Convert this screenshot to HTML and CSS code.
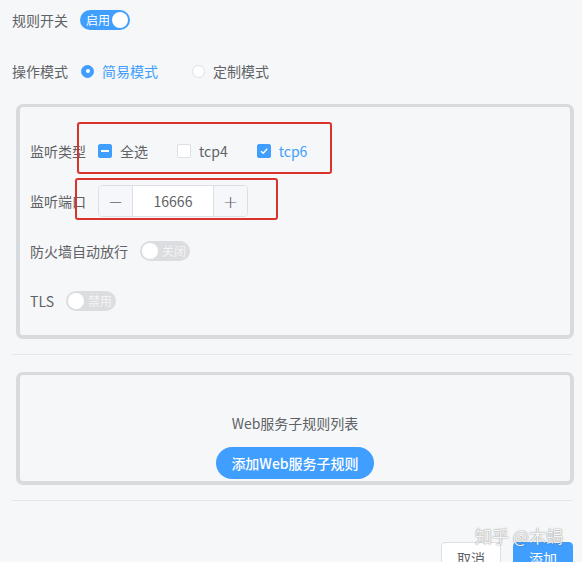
FILE: index.html
```html
<!DOCTYPE html>
<html lang="zh-CN">
<head>
<meta charset="utf-8">
<title>规则</title>
<link rel="stylesheet" href="styles.css">
</head>
<body>
<div class="page">
  <div class="row top-row">
    <span class="label">规则开关</span>
    <span class="switch on"><span class="switch-text">启用</span><span class="knob"></span></span>
  </div>
  <div class="row top-row mode-row">
    <span class="label">操作模式</span>
    <span class="radio checked"><span class="radio-dot"></span><span class="radio-label">简易模式</span></span>
    <span class="radio"><span class="radio-dot"></span><span class="radio-label">定制模式</span></span>
  </div>

  <div class="card main-card">
    <div class="row">
      <span class="label">监听类型</span>
      <span class="checkbox indeterminate"><span class="box"><span class="dash"></span></span><span class="cb-label">全选</span></span>
      <span class="checkbox"><span class="box"></span><span class="cb-label">tcp4</span></span>
      <span class="checkbox checked"><span class="box"><svg width="10" height="10" viewBox="0 0 10 10"><path d="M2 5.2 L4.2 7.3 L8.2 2.8" fill="none" stroke="#fff" stroke-width="1.4"/></svg></span><span class="cb-label">tcp6</span></span>
    </div>
    <div class="row">
      <span class="label">监听端口</span>
      <span class="number-input">
        <span class="step minus">−</span>
        <span class="value">16666</span>
        <span class="step plus">+</span>
      </span>
    </div>
    <div class="row">
      <span class="label">防火墙自动放行</span>
      <span class="switch off"><span class="knob"></span><span class="switch-text">关闭</span></span>
    </div>
    <div class="row">
      <span class="label">TLS</span>
      <span class="switch off"><span class="knob"></span><span class="switch-text">禁用</span></span>
    </div>
    <div class="mark mark-type"></div>
    <div class="mark mark-port"></div>
  </div>

  <div class="divider"></div>

  <div class="card sub-card">
    <div class="sub-title">Web服务子规则列表</div>
    <button class="pill-btn">添加Web服务子规则</button>
  </div>

  <div class="divider"></div>

  <div class="footer">
    <button class="btn btn-default">取消</button>
    <button class="btn btn-primary">添加</button>
  </div>

  <div class="watermark">知乎 @木蝎</div>
</div>
</body>
</html>
```

FILE: styles.css
```css
* { box-sizing: border-box; }

html, body {
  margin: 0;
  padding: 0;
  background: #f6f7f8;
  overflow: hidden;
}

body {
  font-family: "Noto Sans CJK SC", "Liberation Sans", sans-serif;
  font-size: 14px;
  color: #606266;
  width: 582px;
  height: 562px;
}

.page {
  position: relative;
  padding: 4px 10px 0 12px;
  height: 562px;
}

.row {
  display: flex;
  align-items: center;
  height: 32px;
  margin-bottom: 18px;
}

.top-row { margin-bottom: 0; }
.mode-row { margin-top: 19px; }

.label {
  margin-right: 12px;
  line-height: 20px;
  white-space: nowrap;
}

/* switch */
.switch {
  display: inline-flex;
  align-items: center;
  width: 50px;
  height: 20px;
  border-radius: 10px;
  padding: 0 2px;
  font-size: 12px;
  line-height: 20px;
  color: #fff;
}
.switch.on {
  background: #409eff;
  justify-content: space-between;
  padding-left: 6px;
}
.switch.off {
  background: #dcdde0;
  color: #f4f4f5;
}
.switch.off .switch-text { margin-left: 4px; }
.knob {
  width: 16px;
  height: 16px;
  border-radius: 50%;
  background: #fff;
  flex: none;
}

/* radio */
.radio {
  display: inline-flex;
  align-items: center;
  margin-right: 33px;
}
.radio-dot {
  width: 13px;
  height: 13px;
  border-radius: 50%;
  border: 1px solid #dcdfe6;
  background: #fff;
  margin-left: 1px;
  margin-right: 8px;
  display: inline-flex;
  align-items: center;
  justify-content: center;
}
.radio.checked .radio-dot {
  background: #409eff;
  border-color: #409eff;
}
.radio.checked .radio-dot::after {
  content: "";
  width: 4px;
  height: 4px;
  border-radius: 50%;
  background: #fff;
}
.radio.checked .radio-label { color: #409eff; }
.radio-label { line-height: 20px; }

/* card */
.card {
  border: 4px solid #d8dadd;
  border-top-width: 3px;
  border-radius: 7px;
  background: #f6f7f8;
  margin-left: 4px;
  margin-right: -2px;
}
.main-card {
  position: relative;
  margin-top: 17px;
  padding: 28px 10px 0 10px;
  height: 235px;
}
.main-card .row:last-of-type { margin-bottom: 0; }

/* checkbox */
.checkbox {
  display: inline-flex;
  align-items: center;
  margin-right: 29px;
}
.box {
  width: 14px;
  height: 14px;
  border: 1px solid #dcdfe6;
  border-radius: 2px;
  background: #fff;
  display: inline-flex;
  align-items: center;
  justify-content: center;
  margin-right: 8px;
}
.checkbox.checked .box,
.checkbox.indeterminate .box {
  background: #409eff;
  border-color: #409eff;
}
.dash {
  width: 8px;
  height: 2px;
  background: #fff;
}
.cb-label { line-height: 20px; }
.checkbox.checked .cb-label { color: #409eff; }

/* number input */
.number-input {
  display: inline-flex;
  width: 150px;
  height: 32px;
  border: 1px solid #dcdfe6;
  border-radius: 4px;
  background: #fff;
  overflow: hidden;
}
.step {
  width: 34px;
  flex: none;
  background: #f5f7fa;
  display: flex;
  align-items: center;
  justify-content: center;
  font-size: 18px;
  color: #606266;
  font-family: "DejaVu Sans", sans-serif;
  font-weight: 200;
}
.minus { border-right: 1px solid #dcdfe6; }
.plus { border-left: 1px solid #dcdfe6; }
.value {
  flex: 1;
  display: flex;
  align-items: center;
  justify-content: center;
  color: #606266;
}

/* red annotations */
.mark {
  position: absolute;
  border: 2px solid #d8342c;
  border-radius: 3px;
}
.mark-type { left: 57px; top: 15px; width: 255px; height: 52px; }
.mark-port { left: 55px; top: 71px; width: 203px; height: 42px; }

.divider {
  height: 1px;
  background: #e4e6ea;
  margin-top: 15px;
}

.sub-card {
  margin-top: 17px;
  height: 113px;
  padding-top: 38px;
  display: flex;
  flex-direction: column;
  align-items: center;
}
.sub-title {
  line-height: 20px;
  font-size: 14px;
  color: #606266;
}
.pill-btn {
  margin-top: 14px;
  height: 32px;
  width: 158px;
  border: none;
  border-radius: 16px;
  background: #409eff;
  color: #fff;
  font-family: inherit;
  font-size: 14px;
  font-weight: 500;
  padding: 0;
}

.footer {
  margin-top: 41px;
  margin-right: -1px;
  display: flex;
  justify-content: flex-end;
  gap: 12px;
}
.btn {
  width: 60px;
  height: 32px;
  border-radius: 4px;
  font-family: inherit;
  font-size: 14px;
  padding: 0;
}
.btn-default {
  background: #fff;
  border: 1px solid #dcdfe6;
  color: #606266;
}
.btn-primary {
  background: #409eff;
  border: 1px solid #409eff;
  color: #fff;
}

.watermark {
  position: absolute;
  left: 475px;
  top: 525px;
  font-size: 17px;
  line-height: 22px;
  color: rgba(255, 255, 255, 0.92);
  text-shadow: 0 0 1px rgba(90, 90, 90, 0.6), 0 0 2px rgba(90, 90, 90, 0.4);
  white-space: nowrap;
}
```
